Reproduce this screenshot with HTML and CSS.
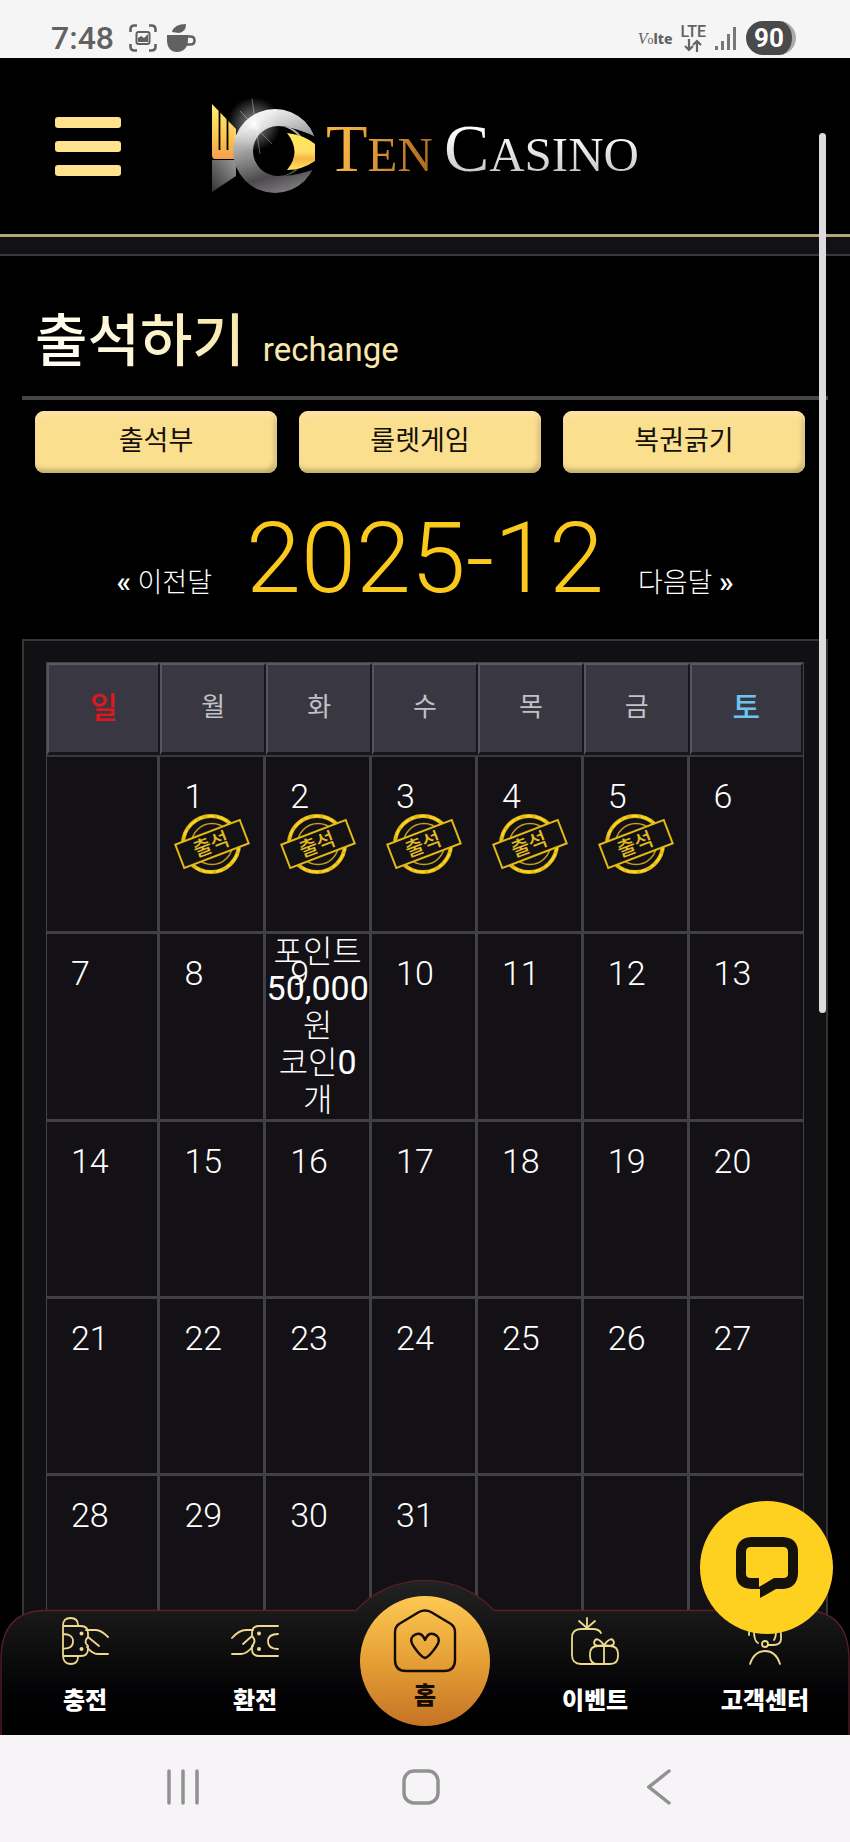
FILE: index.html
```html
<!DOCTYPE html>
<html lang="ko">

<head>
  <meta charset="UTF-8">
  <meta name="viewport" content="width=device-width, initial-scale=1.0">
  <title>출석하기</title>

  <link rel="stylesheet" href="styles.css">
</head>

<body>
  <svg class="defs" width="0" height="0" aria-hidden="true">
    <defs>
      <symbol id="stamp" viewBox="0 0 76 62">
        <circle cx="37" cy="31" r="28" fill="none" stroke="#e3b915" stroke-width="4" />
        <circle cx="37" cy="31" r="28" fill="none" stroke="#fbd52c" stroke-width="2" stroke-dasharray="7 3 11 2 4 5" />
        <circle cx="38" cy="31" r="20.500" fill="none" stroke="#c39e1c" stroke-width="1.500" />
        <g transform="rotate(-21 38 31)">
          <rect x="3.500" y="18.500" width="69" height="25" fill="#121114" stroke="#e3b915" stroke-width="2" />
          <text x="37" y="38" text-anchor="middle" class="stamp-text">출석</text>
        </g>
      </symbol>
    </defs>
  </svg>

  <div class="screen">
    <div class="status-bar">
      <div class="status-left">
        <span class="clock">7:48</span>
        <svg width="28" height="28" viewBox="0 0 28 28" fill="none" stroke="#616161" stroke-width="2.600">
          <path d="M1.500 8V5.500q0-4 4-4H8M20 1.500h2.500q4 0 4 4V8M26.500 20v2.500q0 4-4 4H20M8 26.500H5.500q-4 0-4-4V20" />
          <rect x="7.500" y="8" width="13" height="12" rx="2" stroke-width="2" />
          <path d="M9 18v-4l3-2 3 2 4-4v8z" fill="#616161" stroke="none" />
        </svg>
        <svg width="30" height="30" viewBox="0 0 30 30">
          <path d="M1 12h21v5c0 8-5 12-11 12S1 25 1 17z" fill="#616161" />
          <path d="M21 13.500h3.500q4 0 4 4t-4 4H21" fill="none" stroke="#616161" stroke-width="2.500" />
          <path d="M6 9Q8 1 20 1q0 8-7 9z" fill="#616161" />
        </svg>
      </div>
      <div class="status-right">
        <span class="volte"><i>V</i><small>o</small><b>lte</b></span>
        <span class="lte">LTE
          <svg width="18" height="13" viewBox="0 0 18 13" fill="none" stroke="#666" stroke-width="2.200">
            <path d="M5 0v11M1 7l4 4 4-4M13 13V2M9 6l4-4 4 4" />
          </svg>
        </span>
        <svg width="24" height="26" viewBox="0 0 24 26" fill="#777">
          <path d="M1 21h3v4H1zM7 16h3v9H7zM13 9h3v16h-3zM19 2h3v23h-3z" />
        </svg>
        <span class="battery">90</span>
      </div>
    </div>

    <div class="viewport">
      <header class="header">
        <button class="menu-btn" aria-label="메뉴"><span></span><span></span><span></span></button>
        <a href="#" class="logo">
          <svg width="108" height="100" viewBox="0 0 108 100">
            <defs>
              <linearGradient id="gold" x1="0" y1="0" x2="0" y2="1">
                <stop offset="0" stop-color="#ffee72" />
                <stop offset=".6" stop-color="#fbc54e" />
                <stop offset="1" stop-color="#f3a04a" />
              </linearGradient>
              <linearGradient id="eye" x1="0" y1="0" x2="0" y2="1">
                <stop offset="0" stop-color="#ffe95a" />
                <stop offset=".5" stop-color="#ffdf62" />
                <stop offset=".7" stop-color="#f6b546" />
                <stop offset="1" stop-color="#ffe660" />
              </linearGradient>
              <linearGradient id="steel" x1=".2" y1="0" x2=".5" y2="1">
                <stop offset="0" stop-color="#ffffff" />
                <stop offset=".3" stop-color="#c4c4c4" />
                <stop offset=".62" stop-color="#777" />
                <stop offset=".8" stop-color="#4c4a4c" />
                <stop offset="1" stop-color="#777577" />
              </linearGradient>
              <linearGradient id="foot" x1="1" y1="0" x2="0" y2="1">
                <stop offset="0" stop-color="#999" />
                <stop offset="1" stop-color="#333" />
              </linearGradient>
              <radialGradient id="flare">
                <stop offset="0" stop-color="#fff" stop-opacity=".95" />
                <stop offset=".3" stop-color="#fff" stop-opacity=".4" />
                <stop offset="1" stop-color="#fff" stop-opacity="0" />
              </radialGradient>
            </defs>
            <path d="M2 8L26 33V63H5q-3 0-3-4z" fill="url(#gold)" />
            <path d="M9.500 15V54M17.500 23V54" stroke="#000" stroke-width="1.800" />
            <path d="M2 64H26V80L2 96z" fill="url(#foot)" />
            <path fill-rule="evenodd" d="M65 13a42 42 0 1 0 0 84a42 42 0 1 0 0-84M68 30a25 25 0 1 1 0 50a25 25 0 1 1 0-50" fill="url(#steel)" />
            <path d="M70 30Q88 32 108 42V72Q90 79 72 80A25 25 0 0 0 70 30z" fill="#000" />
            <path d="M77 37Q94 39 105 48V65Q92 74 77 74Q92 56 77 37z" fill="url(#eye)" />
            <circle cx="44" cy="28" r="27" fill="url(#flare)" />
            <path d="M30 15L62 48M42 3L50 58M24 42L66 14" stroke="#fff" stroke-width=".6" opacity=".6" />
          </svg>
          <span class="logo-text"><span class="logo-ten">T<small>EN</small></span> <span class="logo-casino">C<small>ASINO</small></span></span>
        </a>
      </header>
      <div class="strip"></div>

      <main class="content">
        <h1 class="title"><span>출석하기</span> <small>rechange</small></h1>

        <div class="tabs">
          <button class="tab">출석부</button>
          <button class="tab">룰렛게임</button>
          <button class="tab">복권긁기</button>
        </div>

        <div class="month">
          <a href="#"><b>«</b> 이전달</a>
          <strong>2025-12</strong>
          <a href="#">다음달 <b>»</b></a>
        </div>

        <div class="panel">
          <table class="calendar">
            <thead>
              <tr>
                <th class="sun">일</th>
                <th>월</th>
                <th>화</th>
                <th>수</th>
                <th>목</th>
                <th>금</th>
                <th class="sat">토</th>
              </tr>
            </thead>
            <tbody>
              <tr>
                <td></td>
                <td><span class="day">1</span><svg class="stamp"><use href="#stamp" /></svg></td>
                <td><span class="day">2</span><svg class="stamp"><use href="#stamp" /></svg></td>
                <td><span class="day">3</span><svg class="stamp"><use href="#stamp" /></svg></td>
                <td><span class="day">4</span><svg class="stamp"><use href="#stamp" /></svg></td>
                <td><span class="day">5</span><svg class="stamp"><use href="#stamp" /></svg></td>
                <td><span class="day">6</span></td>
              </tr>
              <tr>
                <td><span class="day">7</span></td>
                <td><span class="day">8</span></td>
                <td class="has-reward">
                  <span class="day">9</span>
                  <p class="reward">포인트<br><b>50,000</b><br>원<br>코인<b>0</b><br>개</p>
                </td>
                <td><span class="day">10</span></td>
                <td><span class="day">11</span></td>
                <td><span class="day">12</span></td>
                <td><span class="day">13</span></td>
              </tr>
              <tr>
                <td><span class="day">14</span></td>
                <td><span class="day">15</span></td>
                <td><span class="day">16</span></td>
                <td><span class="day">17</span></td>
                <td><span class="day">18</span></td>
                <td><span class="day">19</span></td>
                <td><span class="day">20</span></td>
              </tr>
              <tr>
                <td><span class="day">21</span></td>
                <td><span class="day">22</span></td>
                <td><span class="day">23</span></td>
                <td><span class="day">24</span></td>
                <td><span class="day">25</span></td>
                <td><span class="day">26</span></td>
                <td><span class="day">27</span></td>
              </tr>
              <tr>
                <td><span class="day">28</span></td>
                <td><span class="day">29</span></td>
                <td><span class="day">30</span></td>
                <td><span class="day">31</span></td>
                <td></td>
                <td></td>
                <td></td>
              </tr>
            </tbody>
          </table>
        </div>
      </main>

      <div class="scrollbar"></div>

      <nav class="bottom-nav">
        <svg class="nav-bg" viewBox="0 0 850 157" preserveAspectRatio="none">
          <defs>
            <linearGradient id="nav-fill" x1="0" y1="0" x2="0" y2="1">
              <stop offset="0" stop-color="#242323" />
              <stop offset=".22" stop-color="#191818" />
              <stop offset=".75" stop-color="#020103" />
              <stop offset="1" stop-color="#000" />
            </linearGradient>
          </defs>
          <path d="M1 158V80Q2 33 45 32.500H356A94 94 0 0 1 494 32.500H805Q848 33 849 80V158" fill="url(#nav-fill)" stroke="#571f26" stroke-width="1.300" />
        </svg>
        <a href="#" class="nav-item">
          <svg width="48" height="48" viewBox="0 0 48 48">
            <path d="M2 9V38q0 9 7.500 9T17 40v-1M2 9q0-8 7.500-8T17 8v1M2 9H20q7 0 7 7v4q-5 5 0 9v3q0 7-7 7H2M2 17q10 0 10 7.500T2 31.500" />
            <path d="M25 13H35q5 0 12 7M27 20l11 9M26 30q5 7 11 7H47" />
            <circle class="dot" cx="20.500" cy="16.500" r="2" />
            <circle class="dot" cx="20.500" cy="32" r="2" />
          </svg>
          <span>충전</span>
        </a>
        <a href="#" class="nav-item">
          <svg width="48" height="48" viewBox="0 0 48 48">
            <path d="M47 9H28q-7 0-7 7v3q5 5 0 10v3q0 7 7 7H47M47 17q-10 0-10 7.500t10 7.500" />
            <path d="M22 13H15q-7 0-14 8M21 19l-9 8M22 29q-6 8-12 8H1" />
            <circle class="dot" cx="28" cy="16.500" r="2" />
            <circle class="dot" cx="28" cy="32" r="2" />
          </svg>
          <span>환전</span>
        </a>
        <a href="#" class="nav-item nav-home">
          <svg width="64" height="64" viewBox="0 0 64 64">
            <path d="M2 23Q2 18 6 15L26 3q6-3 12 0L58 15q4 3 4 8V51q0 11-11 11H13Q2 62 2 51z" />
            <path d="M32 49Q28 48 21 38Q16 31 20 27Q28 21 32 31Q36 21 44 27Q48 31 43 38Q36 48 32 49z" />
          </svg>
          <span>홈</span>
        </a>
        <a href="#" class="nav-item">
          <svg width="48" height="48" viewBox="0 0 48 48">
            <path d="M30 16q-2-4-8-4H10q-9 0-9 9V38q0 9 9 9H38M16 12V1M8 4l8 7 8-7" />
            <path d="M27 29H39q8 0 8 8v2q0 8-8 8H27q-8 0-8-8V37q0-8 8-8M33 29V47M33 28Q23 30 23 25.500Q25 18 33 28Q41 18 43 25.500Q43 30 33 28" />
          </svg>
          <span>이벤트</span>
        </a>
        <a href="#" class="nav-item">
          <svg width="48" height="48" viewBox="0 0 48 48">
            <path d="M9 47q4-13 15-13t15 13M8 18q0-16 16-16t16 16v4q0 6-8 6H27M13 14q0 10 4 12M35 14q0 6-2 9" />
            <circle cx="24" cy="27" r="3" />
          </svg>
          <span>고객센터</span>
        </a>
      </nav>

      <button class="chat-btn" aria-label="상담">
        <svg width="64" height="64" viewBox="0 0 64 64">
          <path fill-rule="evenodd" d="M16 1H48Q63 2 63 16V38Q62 52 48 53H41L25 62V53H16Q1 52 1 38V16Q2 2 16 1zM16 11q-5 0-5 5V38q0 4 5 4h8v9l15-9h9q5 0 5-4V16q0-5-5-5z" fill="#15120c" />
        </svg>
      </button>
    </div>

    <div class="system-nav">
      <button aria-label="최근 앱">
        <svg width="36" height="36" viewBox="0 0 36 36"><path d="M4 2V34M18 2V34M32 2V34" /></svg>
      </button>
      <button aria-label="홈">
        <svg width="38" height="36" viewBox="0 0 38 36"><rect x="2" y="2" width="34" height="32" rx="10" /></svg>
      </button>
      <button aria-label="뒤로">
        <svg width="24" height="36" viewBox="0 0 24 36"><path d="M22 2L2 18L22 34" /></svg>
      </button>
    </div>
  </div>
</body>

</html>
```

FILE: styles.css
```css
* {
  box-sizing: border-box;
}

body {
  background: #000;
  color: #fff;
  font-family: Roboto, "Noto Sans CJK KR", sans-serif;
  margin: 0;
}

a {
  color: inherit;
  text-decoration: none;
}

button {
  border: 0;
  cursor: pointer;
  font-family: inherit;
  padding: 0;
}

.defs {
  position: absolute;
}

.screen {
  display: flex;
  flex-direction: column;
  height: 100vh;
}

/* phone status bar */
.status-bar {
  align-items: center;
  background: #f5f5f5;
  color: #616161;
  display: flex;
  height: 58px;
  justify-content: space-between;
  padding: 18px 54px 0 51px;
}

.status-left,
.status-right {
  align-items: center;
  display: flex;
}

.status-left {
  gap: 9px;
}

.status-right {
  gap: 8px;
}

.clock {
  font-size: 32px;
  font-weight: 500;
  line-height: 40px;
  margin-right: 6px;
}

.volte {
  font-family: "Liberation Serif", serif;
  font-size: 16px;
}

.volte small {
  font-size: 12px;
}

.volte b {
  font-family: "Noto Sans", sans-serif;
  font-size: 14px;
  font-weight: 800;
}

.lte {
  align-items: center;
  display: flex;
  flex-direction: column;
  font-size: 16px;
  font-weight: 500;
  line-height: 14px;
}

.battery {
  background: #4a4a4a;
  border-radius: 17px;
  border-right: 4px solid #aaa;
  color: #fff;
  font-size: 26px;
  font-weight: 700;
  line-height: 34px;
  text-align: center;
  width: 50px;
}

/* header */
.viewport {
  flex: 1;
  overflow: hidden;
  position: relative;
}

.header {
  align-items: center;
  border-bottom: 3px solid #b5a678;
  display: flex;
  height: 179px;
  padding: 0 55px;
}

.menu-btn {
  background: none;
  display: flex;
  flex-direction: column;
  gap: 13px;
  width: 66px;
}

.menu-btn span {
  background: #fee28e;
  border-radius: 3px;
  height: 11px;
}

.logo {
  align-items: center;
  display: flex;
  gap: 8px;
  margin-left: 89px;
}

.logo-text {
  font-family: "Liberation Serif", serif;
  font-size: 68px;
  line-height: 76px;
  padding-top: 10px;
  white-space: nowrap;
}

.logo-text small {
  font-size: 49px;
}

.logo-ten,
.logo-casino {
  background: linear-gradient(100deg, #f5b142 20%, #a8651c);
  -webkit-background-clip: text;
  background-clip: text;
  color: transparent;
}

.logo-ten {
  margin-right: -6px;
}

.logo-casino {
  background-image: linear-gradient(#fff 30%, #b5b5b5);
}

.strip {
  background: #121114;
  border-bottom: 2px solid #39383b;
  height: 19px;
}

/* content */
.content {
  padding: 44px 22px 0;
}

.title {
  align-items: baseline;
  border-bottom: 4px solid #454446;
  display: flex;
  font-size: 57px;
  font-weight: 500;
  gap: 18px;
  height: 100px;
  line-height: 84px;
  margin: 0;
  padding-left: 13px;
}

.title span {
  background: linear-gradient(60deg, #fffdf0 20%, #f9e6a2);
  -webkit-background-clip: text;
  background-clip: text;
  color: transparent;
}

.title small {
  color: #f9e8ad;
  font-size: 33px;
  font-weight: 400;
}

.tabs {
  display: grid;
  gap: 22px;
  grid-template-columns: repeat(3, 1fr);
  padding: 11px 23px 0 13px;
}

.tab {
  background: #f9df8e;
  border-radius: 9px;
  box-shadow: inset 0 4px 6px #ffe3a8, inset -2px -3px 5px #b59f66;
  color: #15100a;
  font-size: 27px;
  height: 62px;
  padding-bottom: 8px;
}

.month {
  align-items: baseline;
  display: flex;
  font-size: 27px;
  font-weight: 300;
  gap: 34px;
  height: 166px;
  justify-content: center;
  padding-top: 27px;
}

.month b {
  font-size: 30px;
  font-weight: 500;
}

.month strong {
  color: #fac91c;
  font-size: 99px;
  font-weight: 300;
  line-height: 116px;
}

.panel {
  background: #111113;
  border: 2px solid #353437;
  padding: 21px 22px;
}

/* calendar */
.calendar {
  border: 1px solid #434245;
  border-collapse: separate;
  border-spacing: 0;
  table-layout: fixed;
  width: 100%;
}

.calendar th {
  background: #393842;
  border: 2px solid #17161b;
  border-left-color: #56555b;
  border-top-color: #5b5b5f;
  color: #c2c1c7;
  font-size: 26px;
  font-weight: 400;
  height: 92px;
  padding: 0 0 8px;
}

.calendar th:first-child,
.calendar th:last-child {
  width: 15%;
}

.calendar th.sun {
  color: #e3161b;
  font-size: 30px;
  font-weight: 500;
}

.calendar th.sat {
  color: #6cc5f0;
  font-size: 30px;
  font-weight: 500;
}

.calendar thead th {
  border-bottom-width: 3px;
}

.calendar tbody tr:first-child td {
  border-top: 2px solid #39383c;
}

.calendar td {
  background: #131116;
  border-bottom: 3px solid #414043;
  border-right: 3px solid #414043;
  height: 177px;
  padding: 19px 0 0 24px;
  position: relative;
  vertical-align: top;
}

.calendar tbody tr:first-child td {
  height: 179px;
}

.calendar td:last-child {
  border-right: 0;
}

.day {
  display: block;
  font-size: 34px;
  font-weight: 300;
  line-height: 40px;
}

.stamp {
  display: block;
  height: 62px;
  margin: -3px 0 0 -10px;
  width: 76px;
}

.stamp-text {
  fill: #e3bb24;
  font-family: "Noto Sans CJK KR", sans-serif;
  font-size: 20px;
  font-weight: 500;
}

.calendar td.has-reward {
  padding: 0;
}

/* the day number sits under the reward text */
.has-reward .day {
  left: 24px;
  position: absolute;
  top: 19px;
}

.reward {
  font-size: 32px;
  font-weight: 300;
  line-height: 37px;
  margin: 0;
  position: relative;
  text-align: center;
}

.reward b {
  font-size: 34px;
  font-weight: 400;
  line-height: 30px;
}

.scrollbar {
  background: #dddbde;
  border-radius: 4px;
  height: 880px;
  position: absolute;
  right: 24px;
  top: 75px;
  width: 7px;
}

/* bottom menu */
.bottom-nav {
  bottom: 0;
  display: grid;
  grid-template-columns: repeat(5, 1fr);
  height: 157px;
  left: 0;
  position: absolute;
  right: 0;
}

.nav-bg {
  height: 100%;
  left: 0;
  position: absolute;
  top: 0;
  width: 100%;
}

.nav-item {
  align-items: center;
  display: flex;
  flex-direction: column;
  font-size: 24px;
  font-weight: 800;
  gap: 18px;
  line-height: 36px;
  padding-top: 39px;
  position: relative;
}

.nav-item svg {
  fill: none;
  stroke: #efd98c;
  stroke-linecap: round;
  stroke-linejoin: round;
  stroke-width: 1.8;
}

.nav-item .dot {
  fill: #efd98c;
  stroke: none;
}

.nav-home {
  background: linear-gradient(#fdc852, #e6a036 50%, #c57325);
  border-radius: 50%;
  color: #150d05;
  gap: 5px;
  height: 130px;
  justify-self: center;
  margin-top: 18px;
  padding-top: 13px;
  width: 130px;
}

.nav-home svg {
  stroke: #150d05;
  stroke-width: 2.4;
}

.chat-btn {
  align-items: center;
  background: #fed120;
  border-radius: 50%;
  bottom: 101px;
  display: flex;
  height: 133px;
  justify-content: center;
  position: absolute;
  right: 17px;
  width: 133px;
}

/* phone navigation */
.system-nav {
  align-items: center;
  background: #f6f4f7;
  display: grid;
  grid-template-columns: repeat(3, 1fr);
  height: 107px;
  justify-items: center;
  padding: 0 72px 4px 64px;
}

.system-nav button {
  background: none;
}

.system-nav svg {
  display: block;
  fill: none;
  stroke: #929192;
  stroke-linecap: round;
  stroke-width: 3.5;
}
```
